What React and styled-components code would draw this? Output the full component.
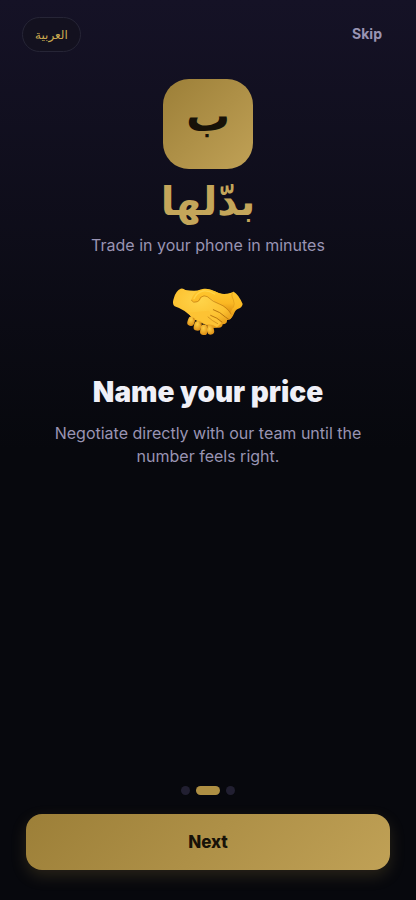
import styled, { createGlobalStyle } from 'styled-components';

const GlobalStyle = createGlobalStyle`
  * {
    box-sizing: border-box;
  }

  body {
    margin: 0;
    background: #07080d;
    font-family: Inter, sans-serif;
  }

  button {
    font-family: inherit;
    cursor: pointer;
  }
`;

const Screen = styled.main`
  display: flex;
  flex-direction: column;
  min-height: 100vh;
  padding: 17px 22px 30px;
  background: linear-gradient(180deg, #151226 0%, #07080d 50%, #07080d 100%);
`;

const TopBar = styled.header`
  display: flex;
  justify-content: space-between;
  align-items: flex-start;
`;

const LangButton = styled.button`
  height: 35px;
  padding: 0 12px;
  border: 1px solid #262536;
  border-radius: 18px;
  background: #13111f;
  color: #c9a84f;
  font-family: 'DejaVu Sans', sans-serif;
  font-size: 12px;
  font-weight: 400;
`;

const SkipButton = styled.button`
  height: 32px;
  padding: 0 12px;
  border: none;
  background: none;
  color: #9994b3;
  font-size: 14px;
  font-weight: 700;
`;

const Brand = styled.section`
  display: flex;
  flex-direction: column;
  align-items: center;
  margin-top: 27px;
`;

const LogoTile = styled.div`
  display: flex;
  justify-content: center;
  width: 90px;
  height: 90px;
  border-radius: 26px;
  background: linear-gradient(135deg, #9c7f38, #c0a156);
  color: #171208;
  font-family: 'DejaVu Sans', sans-serif;
  font-size: 44px;
  font-weight: 700;
  line-height: 74px;
`;

const BrandName = styled.h1`
  margin: 0;
  color: #c4a65a;
  font-family: 'DejaVu Sans', sans-serif;
  font-size: 40px;
  font-weight: 700;
  line-height: 64px;
`;

const Tagline = styled.p`
  margin: 0;
  color: #9994b3;
  font-size: 16px;
  line-height: 24px;
`;

const Slide = styled.section`
  display: flex;
  flex: 1;
  flex-direction: column;
  align-items: center;
  margin-top: 31px;
  text-align: center;
`;

const SlideTitle = styled.h2`
  margin: 38px 0 0;
  color: #f0f0f7;
  font-size: 28px;
  font-weight: 900;
  line-height: 36px;
`;

const SlideText = styled.p`
  max-width: 320px;
  margin: 12px 0 0;
  color: #9994b3;
  font-size: 16px;
  line-height: 23px;
`;

const Dots = styled.div`
  display: flex;
  justify-content: center;
  gap: 6px;
  margin-bottom: 19px;
`;

const Dot = styled.span`
  width: ${(props) => (props.$active ? '24px' : '9px')};
  height: 9px;
  border-radius: 5px;
  background: ${(props) => (props.$active ? '#ae8f43' : '#211f31')};
`;

const NextButton = styled.button`
  height: 56px;
  margin: 0 4px;
  border: none;
  border-radius: 16px;
  background: linear-gradient(135deg, #9c7f38, #c0a156);
  box-shadow: 0 6px 16px rgba(176, 145, 69, 0.2);
  color: #171208;
  font-size: 17px;
  font-weight: 800;
`;

function Handshake() {
  return (
    <svg width="70" height="48" viewBox="39 40 210 144" role="img" aria-label="Handshake">
      <defs>
        <linearGradient id="skin" x1="0" y1="0" x2="0" y2="1">
          <stop offset="0" stopColor="#ffc92f" />
          <stop offset="0.6" stopColor="#fbb823" />
          <stop offset="1" stopColor="#dd9012" />
        </linearGradient>
        <radialGradient id="palm" cx="0.45" cy="0.3" r="0.75">
          <stop offset="0" stopColor="#ffd44a" />
          <stop offset="0.65" stopColor="#fcc130" />
          <stop offset="1" stopColor="#e59a18" />
        </radialGradient>
        <radialGradient id="tip" cx="0.4" cy="0.35" r="0.7">
          <stop offset="0" stopColor="#ffcf45" />
          <stop offset="1" stopColor="#dc8d14" />
        </radialGradient>
      </defs>
      <path d="M122 50 C144 39 160 48 178 56 Q200 61 221 51 Q235 58 248 88 Q246 100 233 103 C219 110 224 128 207 134 L128 112 Z" fill="url(#skin)" />
      <path d="M62 42 Q70 40 76 46 Q98 50 123 47 L151 57 Q163 75 182 88 Q207 105 215 122 Q217 136 201 136 Q202 149 188 149 Q187 160 174 159 L157 160 L98 132 Q78 106 44 95 Q35 88 42 69 Q48 48 62 42 Z" fill="url(#palm)" />
      <g fill="url(#tip)">
        <rect x="83" y="126" width="21" height="28" rx="10" transform="rotate(18 94 140)" />
        <rect x="102" y="139" width="22" height="29" rx="10" transform="rotate(14 113 153)" />
        <rect x="121" y="150" width="22" height="31" rx="10" transform="rotate(8 132 165)" />
        <rect x="141" y="152" width="21" height="28" rx="10" transform="rotate(-12 151 167)" />
      </g>
      <path d="M82 114 Q93 126 102 128 Q112 138 123 140 Q134 151 145 149 Q158 148 171 158 L184 145 L146 108 Z" fill="#fdc334" />
      <path d="M94 76 C98 61 110 45 128 43 C148 38 167 52 183 57 Q196 61 211 56 Q222 79 220 97 Q216 105 211 115 Q193 93 169 84 Q153 70 137 64 Q123 65 119 78 Q112 84 102 82 Q95 81 94 76 Z" fill="url(#skin)" />
      <g fill="none" stroke="#b97610" strokeLinecap="round">
        <path d="M94 77 Q100 87 112 81 Q119 78 122 68 Q132 60 142 66 Q159 82 178 88 Q202 97 213 118" strokeWidth="2.5" opacity="0.8" />
        <path d="M160 105 Q181 112 196 127 Q202 131 206 134" strokeWidth="3" />
        <path d="M152 122 Q172 129 186 142" strokeWidth="3" />
        <path d="M144 127 Q157 139 173 147" strokeWidth="2.5" opacity="0.7" />
        <path d="M100 131 L104 139 M120 145 L124 152 M141 153 L143 160" strokeWidth="3" opacity="0.6" />
      </g>
      <path d="M102 72 Q110 54 129 49 Q147 47 164 58" fill="none" stroke="#ffd750" strokeWidth="4" strokeLinecap="round" opacity="0.8" />
      <path d="M220 53 Q211 58 220 75 Q225 88 220 99" fill="none" stroke="#e8a51d" strokeWidth="3" />
    </svg>
  );
}

const slides = [
  { id: 1, active: false },
  { id: 2, active: true },
  { id: 3, active: false },
];

export default function App() {
  return (
    <>
      <GlobalStyle />
      <Screen>
        <TopBar>
          <LangButton type="button" lang="ar">العربية</LangButton>
          <SkipButton type="button">Skip</SkipButton>
        </TopBar>
        <Brand>
          <LogoTile lang="ar">ب</LogoTile>
          <BrandName lang="ar">بدّلها</BrandName>
          <Tagline>Trade in your phone in minutes</Tagline>
        </Brand>
        <Slide>
          <Handshake />
          <SlideTitle>Name your price</SlideTitle>
          <SlideText>Negotiate directly with our team until the number feels right.</SlideText>
        </Slide>
        <Dots>
          {slides.map((slide) => (
            <Dot key={slide.id} $active={slide.active} />
          ))}
        </Dots>
        <NextButton type="button">Next</NextButton>
      </Screen>
    </>
  );
}
